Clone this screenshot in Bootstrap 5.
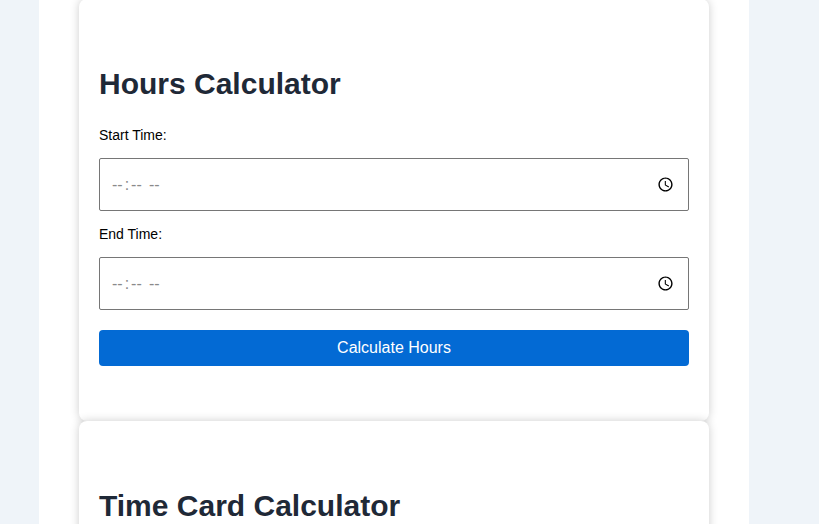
<!DOCTYPE html>
<html lang="en">
<head>
<meta charset="utf-8">
<title>Hours Calculator</title>
<link href="https://cdn.jsdelivr.net/npm/bootstrap@5.3.0/dist/css/bootstrap.min.css" rel="stylesheet">
<script src="https://cdn.jsdelivr.net/npm/bootstrap@5.3.0/dist/js/bootstrap.bundle.min.js"></script>
<style>
html, body { height: 524px; overflow: hidden; }
body { background: #eff4f9; font-family: "Liberation Sans", Arial, sans-serif; color: #000; }
.page-shell { width: 710px; margin-left: 39px; background: #fff; padding: 0 40px; margin-top: -1px; min-height: 600px; }
.calc-panel { background: #fff; border-radius: 8px; padding: 20px; height: 422px; box-shadow: 0 0 10px rgba(0,0,0,.2); }
.calc-title { font-size: 30px; font-weight: 700; line-height: 36px; color: #1f2937; margin: 47px 0 0; }
.calc-label { display: block; font-size: 14px; line-height: 16px; margin: 0; }
.calc-input { display: block; width: 100%; height: 53px; padding: 12px 11px; font-size: 16px; border: 1px solid #767676; border-radius: 2px; background: #fff; font-family: inherit; margin: 0; }
.calc-input::-webkit-datetime-edit { color: #8a8a8a; }
.calc-input::-webkit-datetime-edit-hour-field,
.calc-input::-webkit-datetime-edit-minute-field,
.calc-input::-webkit-datetime-edit-ampm-field { letter-spacing: 1px; padding: 0 1px; }
.calc-input::-webkit-datetime-edit-text { padding: 0 1px; }
.calc-btn { display: block; width: 100%; height: 36px; border: 0; border-radius: 4px; background: #036ad4; color: #fff; font-size: 16px; font-family: inherit; padding: 0; }
.first-label { margin-top: 25px; }
.gap-label { margin: 15px 0 15px; }
.gap-first { margin-bottom: 15px; }
.btn-gap { margin-top: 20px; }
</style>
</head>
<body>
<div class="page-shell">
  <section class="calc-panel">
    <h2 class="calc-title">Hours Calculator</h2>
    <label class="calc-label first-label gap-first" for="s">Start Time:</label>
    <input class="calc-input" id="s" type="time">
    <label class="calc-label gap-label" for="e">End Time:</label>
    <input class="calc-input" id="e" type="time">
    <button class="calc-btn btn-gap" type="button">Calculate Hours</button>
  </section>
  <section class="calc-panel">
    <h2 class="calc-title">Time Card Calculator</h2>
  </section>
</div>
</body>
</html>
